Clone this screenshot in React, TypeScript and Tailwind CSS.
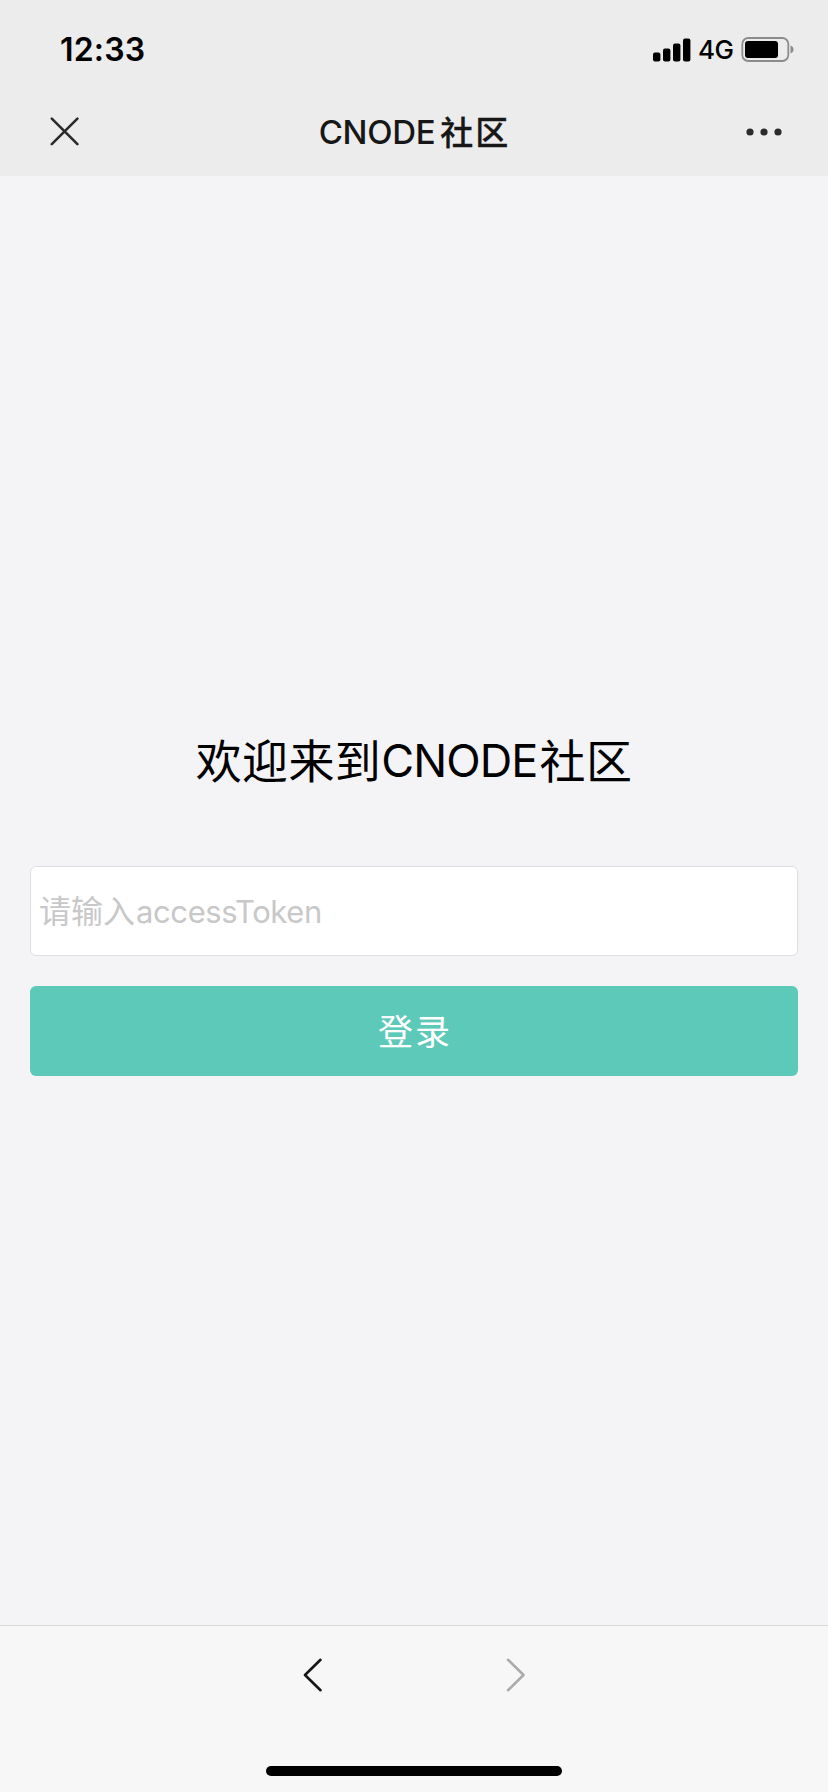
import React, { useState } from "react";

function StatusBar() {
  return (
    <div className="flex h-[88px] items-start justify-between pl-[60px] pr-[33px]">
      <span className="mt-[30px] text-[32px] font-semibold leading-[40px] tracking-[0.2px] text-black">12:33</span>
      <div className="mt-[37px] flex h-[25px] items-center">
        <svg width="38" height="24" viewBox="0 0 38 24" aria-hidden="true">
          <rect x="0" y="14.5" width="7.4" height="9" rx="2" />
          <rect x="10" y="10.5" width="7.4" height="13" rx="2" />
          <rect x="20" y="5.5" width="7.4" height="18" rx="2" />
          <rect x="30" y="0.5" width="7.4" height="23" rx="2" />
        </svg>
        <span className="ml-[7px] w-[36px] text-[26px] font-medium leading-[25px] tracking-[-0.5px] text-black">4G</span>
        <svg className="ml-[7px]" width="54" height="25" viewBox="0 0 54 25" aria-hidden="true">
          <rect x="1.3" y="1" width="46" height="23" rx="6" fill="none" stroke="#8c8c8c" strokeWidth="1.800" />
          <rect x="4" y="4" width="33" height="17" rx="3" />
          <path d="M49.500 8.500c4 1.200 4 6.800 0 8z" fill="#8c8c8c" />
        </svg>
      </div>
    </div>
  );
}

function NavBar() {
  return (
    <div className="grid h-[88px] grid-cols-[1fr_auto_1fr] items-center pl-[50px] pr-[46px]">
      <button type="button" aria-label="关闭" className="justify-self-start">
        <svg width="30" height="30" viewBox="0 0 30 30" fill="none" stroke="#2b2b2b" strokeWidth="2.600" strokeLinecap="round">
          <path d="M1.800 1.600 27.400 27.200M27.400 1.600 1.800 27.200" />
        </svg>
      </button>
      <h1 className="mr-[3px] flex items-center text-[33px] font-medium leading-[44px] text-[#171717]">
        <span className="tracking-[-0.3px]">CNODE</span>
        <span className="ml-[5px] pt-[1px] tracking-[2px] [-webkit-text-stroke:0.3px_#171717]">社区</span>
      </h1>
      <button type="button" aria-label="更多" className="justify-self-end">
        <svg width="36" height="8" viewBox="0 0 36 8" fill="#2b2b2b">
          <circle cx="4" cy="4" r="3.600" />
          <circle cx="18" cy="4" r="3.600" />
          <circle cx="32" cy="4" r="3.600" />
        </svg>
      </button>
    </div>
  );
}

function TokenField() {
  const [value, setValue] = useState("");
  return (
    <label className="relative mt-[70px] flex h-[90px] rounded-[6px] border border-[#dcdee2] bg-white">
      <input
        type="text"
        value={value}
        onChange={(e) => setValue(e.target.value)}
        className="w-full bg-transparent px-[7px] text-[32px] outline-none"
      />
      {value === "" && (
        <span className="pointer-events-none absolute inset-y-0 left-[8px] flex items-center pt-[2px] text-[32px] text-[#c8c8c8]">
          <span>请输入</span>
          <span className="ml-[1px] text-[31px] tracking-[-0.4px]">accessToken</span>
        </span>
      )}
    </label>
  );
}

function LoginForm() {
  return (
    <main className="flex flex-1 flex-col px-[30px] pt-[550px]">
      <h2 className="flex items-center justify-center text-[46px] leading-[70px] text-black">
        <span className="tracking-[0.4px]">欢迎来到</span>
        <span className="text-[45px] tracking-[-0.9px]">CNODE</span>
        <span className="ml-[2px] tracking-[0.4px]">社区</span>
      </h2>
      <TokenField />
      <button type="button" className="mt-[30px] h-[90px] rounded-[6px] bg-[#5cc9b9] pl-[2px] pt-[2px] text-[35px] tracking-[2px] text-white">
        登录
      </button>
    </main>
  );
}

function BottomBar() {
  return (
    <footer className="flex h-[167px] flex-col items-center justify-between border-t border-[#d9d9d9] bg-[#f7f7f7] pb-[16px] pt-[32px]">
      <div className="flex gap-[183px]">
        <svg width="20" height="34" viewBox="0 0 20 34" fill="none" stroke="#171717" strokeWidth="2.600" strokeLinecap="round" strokeLinejoin="round">
          <path d="M17.500 1.800 2 17 17.500 32.200" />
        </svg>
        <svg width="20" height="34" viewBox="0 0 20 34" fill="none" stroke="#ababab" strokeWidth="2.600" strokeLinecap="round" strokeLinejoin="round">
          <path d="M2 1.800 17.500 17 2 32.200" />
        </svg>
      </div>
      <div className="h-[10px] w-[296px] rounded-full bg-black" />
    </footer>
  );
}

export default function App() {
  return (
    <div className="flex h-[1792px] w-[828px] flex-col overflow-hidden bg-[#f4f4f7] font-['Inter','Noto_Sans_CJK_SC',sans-serif]">
      <header className="h-[176px] bg-[#ececec]">
        <StatusBar />
        <NavBar />
      </header>
      <LoginForm />
      <BottomBar />
    </div>
  );
}
